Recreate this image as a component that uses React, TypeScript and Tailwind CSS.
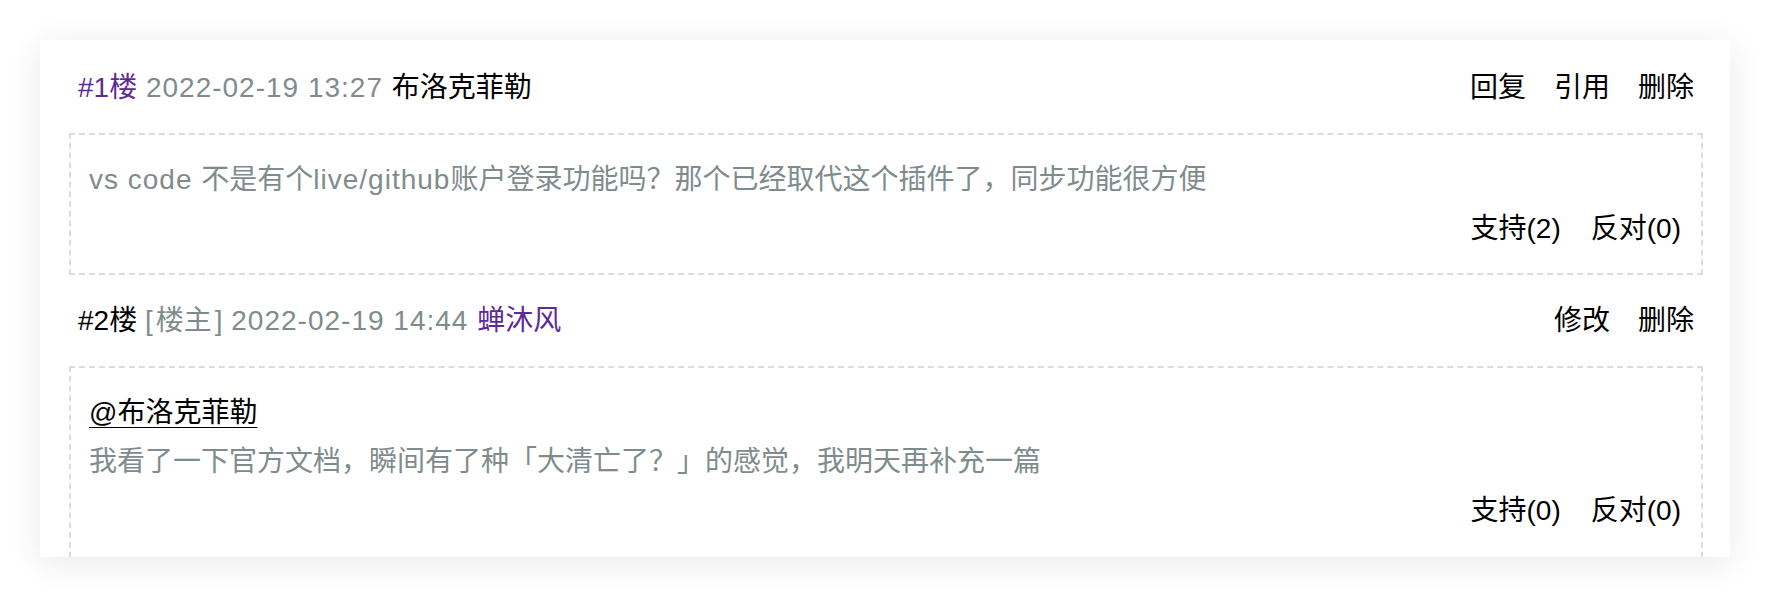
const font = { fontFamily: '"Liberation Sans", "Noto Sans CJK SC", sans-serif' }

type Comment = {
  floor: string
  floorPurple: boolean
  owner?: boolean
  time: string
  name: string
  namePurple: boolean
  actions: string[]
  quote?: string
  text: string
  up: number
  down: number
}

const comments: Comment[] = [
  {
    floor: '#1楼',
    floorPurple: true,
    time: '2022-02-19 13:27',
    name: '布洛克菲勒',
    namePurple: false,
    actions: ['回复', '引用', '删除'],
    text: 'vs code 不是有个live/github账户登录功能吗？那个已经取代这个插件了，同步功能很方便',
    up: 2,
    down: 0,
  },
  {
    floor: '#2楼',
    floorPurple: false,
    owner: true,
    time: '2022-02-19 14:44',
    name: '蝉沐风',
    namePurple: true,
    actions: ['修改', '删除'],
    quote: '@布洛克菲勒',
    text: '我看了一下官方文档，瞬间有了种「大清亡了？」的感觉，我明天再补充一篇',
    up: 0,
    down: 0,
  },
]

// latin runs are a touch wider in the original font
function Mixed({ text }: { text: string }) {
  const parts = text.split(/([A-Za-z0-9/ :-]+)/).filter(Boolean)
  return (
    <>
      {parts.map((p, i) =>
        /^[A-Za-z0-9/ :-]+$/.test(p) ? (
          <span key={i} className="tracking-[1px]">
            {p}
          </span>
        ) : (
          <span key={i}>{p}</span>
        )
      )}
    </>
  )
}

function CommentItem({ c, last }: { c: Comment; last: boolean }) {
  return (
    <div>
      <div className="flex items-center justify-between px-[9px] py-[21px] leading-[49px]">
        <div className="whitespace-pre">
          <span className={c.floorPurple ? 'text-[#5e2a96]' : 'text-black'}>{c.floor}</span>
          {c.owner && (
            <span className="text-[#7f8c8d]">
              {' '}
              <span className="mr-[3px]">[</span>楼主<span className="ml-[3px]">]</span>
            </span>
          )}
          <span className="text-[#7f8c8d] tracking-[1px]"> {c.time} </span>
          <span className={c.namePurple ? 'text-[#5e2a96]' : 'text-black'}>{c.name}</span>
        </div>
        <div className="flex text-black">
          {c.actions.map((a, i) => (
            <span key={a} className={i > 0 ? 'ml-[28px]' : ''}>
              {a}
            </span>
          ))}
        </div>
      </div>
      <div
        className={`border-2 border-dashed border-[#dcdcdc] pl-[18px] pr-[20px] pt-[20px] leading-[49px] ${
          last ? 'pb-[40px]' : 'pb-[20px]'
        }`}
      >
        {c.quote && <div className="text-black underline underline-offset-[5px] decoration-1">{c.quote}</div>}
        <div className="text-[#7f8c8d]">
          <Mixed text={c.text} />
        </div>
        <div className="flex justify-end text-black">
          <span>支持({c.up})</span>
          <span className="ml-[30px]">反对({c.down})</span>
        </div>
      </div>
    </div>
  )
}

export default function App() {
  return (
    <div className="min-h-[598px] bg-white px-[40px] pt-[40px]" style={font}>
      <div className="h-[517px] overflow-hidden bg-white pl-[29px] pr-[27px] pt-[2px] text-[28px] shadow-[0_6px_32px_rgba(0,0,0,0.09)]">
        {comments.map((c, i) => (
          <CommentItem key={c.floor} c={c} last={i === comments.length - 1} />
        ))}
      </div>
    </div>
  )
}
